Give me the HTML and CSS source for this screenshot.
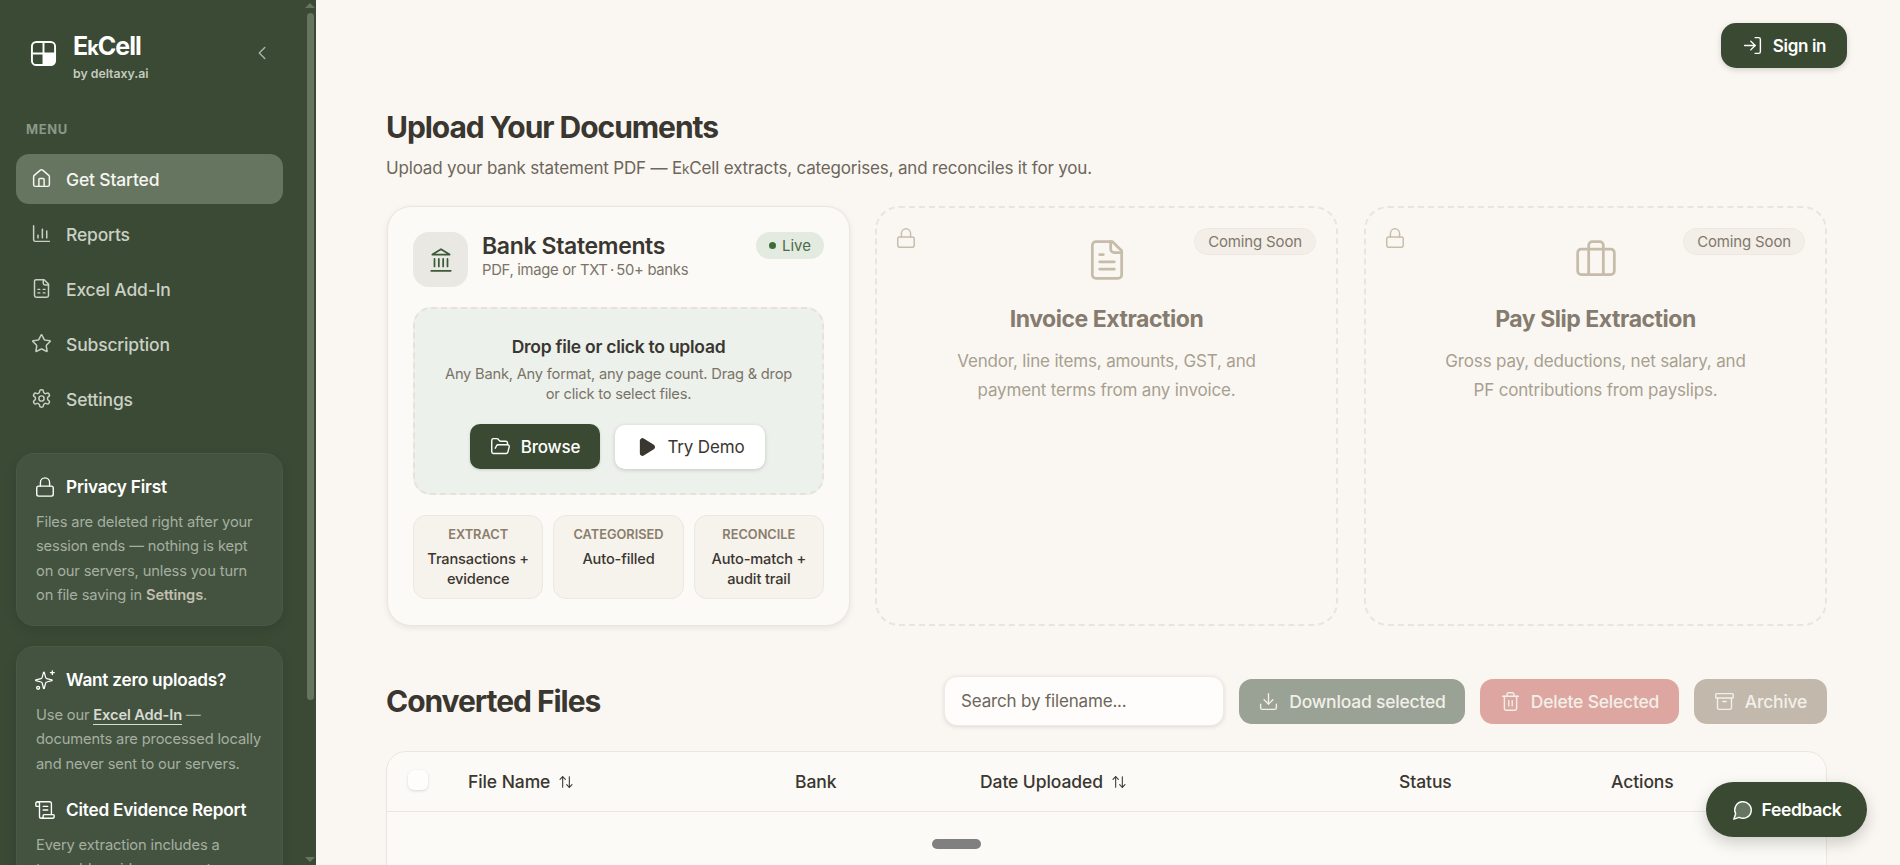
FILE: index.html
```html
<!DOCTYPE html>
<html lang="en">
<head>
  <meta charset="UTF-8" />
  <title>EkCell - Upload Your Documents</title>
  <link rel="stylesheet" href="styles.css">
</head>
<body>

  <aside class="sidebar">
    <div class="brand">
      <svg class="brand-logo" viewBox="0 0 28 28">
        <path class="brand-fill" d="M14 14h12v8a4 4 0 0 1-4 4h-8z"/>
        <rect x="2" y="2" width="24" height="24" rx="4.5"/>
        <path d="M14 2v24M2 14h24"/>
      </svg>
      <div class="brand-text">
        <div class="brand-name">E<span class="small-k">k</span>Cell</div>
        <div class="brand-sub">by deltaxy.ai</div>
      </div>
      <svg class="icon collapse" viewBox="0 0 24 24"><path d="m15 18-6-6 6-6"/></svg>
    </div>

    <div class="menu-label">MENU</div>
    <nav class="nav">
      <a class="nav-item active">
        <svg class="icon" viewBox="0 0 24 24"><path d="M15 21v-8a1 1 0 0 0-1-1h-4a1 1 0 0 0-1 1v8"/><path d="M3 10a2 2 0 0 1 .709-1.528l7-5.999a2 2 0 0 1 2.582 0l7 5.999A2 2 0 0 1 21 10v9a2 2 0 0 1-2 2H5a2 2 0 0 1-2-2z"/></svg>
        Get Started
      </a>
      <a class="nav-item">
        <svg class="icon" viewBox="0 0 24 24"><path d="M3 3v16a2 2 0 0 0 2 2h16"/><path d="M8 17v-3"/><path d="M13 17V7"/><path d="M18 17V9"/></svg>
        Reports
      </a>
      <a class="nav-item">
        <svg class="icon" viewBox="0 0 24 24"><path d="M15 2H6a2 2 0 0 0-2 2v16a2 2 0 0 0 2 2h12a2 2 0 0 0 2-2V7Z"/><path d="M14 2v4a2 2 0 0 0 2 2h4"/><path d="M8 13h2M14 13h2M8 17h2M14 17h2"/></svg>
        Excel Add-In
      </a>
      <a class="nav-item">
        <svg class="icon" viewBox="0 0 24 24"><path d="M11.525 2.295a.53.53 0 0 1 .95 0l2.31 4.679a2.123 2.123 0 0 0 1.595 1.16l5.166.756a.53.53 0 0 1 .294.904l-3.736 3.638a2.123 2.123 0 0 0-.611 1.878l.882 5.14a.53.53 0 0 1-.771.56l-4.618-2.428a2.122 2.122 0 0 0-1.973 0L6.396 21.01a.53.53 0 0 1-.77-.56l.881-5.139a2.122 2.122 0 0 0-.611-1.879L2.16 9.795a.53.53 0 0 1 .294-.906l5.165-.755a2.122 2.122 0 0 0 1.597-1.16z"/></svg>
        Subscription
      </a>
      <a class="nav-item">
        <svg class="icon" viewBox="0 0 24 24"><path d="M12.22 2h-.44a2 2 0 0 0-2 2v.18a2 2 0 0 1-1 1.73l-.43.25a2 2 0 0 1-2 0l-.15-.08a2 2 0 0 0-2.73.73l-.22.38a2 2 0 0 0 .73 2.73l.15.1a2 2 0 0 1 1 1.72v.51a2 2 0 0 1-1 1.74l-.15.09a2 2 0 0 0-.73 2.73l.22.38a2 2 0 0 0 2.73.73l.15-.08a2 2 0 0 1 2 0l.43.25a2 2 0 0 1 1 1.73V20a2 2 0 0 0 2 2h.44a2 2 0 0 0 2-2v-.18a2 2 0 0 1 1-1.73l.43-.25a2 2 0 0 1 2 0l.15.08a2 2 0 0 0 2.73-.73l.22-.39a2 2 0 0 0-.73-2.73l-.15-.08a2 2 0 0 1-1-1.74v-.5a2 2 0 0 1 1-1.74l.15-.09a2 2 0 0 0 .73-2.73l-.22-.38a2 2 0 0 0-2.73-.73l-.15.08a2 2 0 0 1-2 0l-.43-.25a2 2 0 0 1-1-1.73V4a2 2 0 0 0-2-2z"/><circle cx="12" cy="12" r="3"/></svg>
        Settings
      </a>
    </nav>

    <div class="side-card">
      <div class="side-title">
        <svg class="icon" viewBox="0 0 24 24"><rect x="3" y="11" width="18" height="11" rx="2"/><path d="M7 11V7a5 5 0 0 1 10 0v4"/></svg>
        Privacy First
      </div>
      <p class="side-text">Files are deleted right after your session ends — nothing is kept on our servers, unless you turn on file saving in <b class="settings-link">Settings</b>.</p>
    </div>

    <div class="side-card">
      <div class="side-title">
        <svg class="icon" viewBox="0 0 24 24"><path transform="translate(0 1.5) scale(.9)" d="M9.937 15.5A2 2 0 0 0 8.5 14.063l-6.135-1.582a.5.5 0 0 1 0-.962L8.5 9.936A2 2 0 0 0 9.937 8.5l1.582-6.135a.5.5 0 0 1 .963 0L14.063 8.5A2 2 0 0 0 15.5 9.937l6.135 1.581a.5.5 0 0 1 0 .964L15.5 14.063a2 2 0 0 0-1.437 1.437l-1.582 6.135a.5.5 0 0 1-.963 0z"/><path d="M20 2v4M18 4h4"/><circle cx="4.5" cy="20.5" r="1.6"/></svg>
        Want zero uploads?
      </div>
      <p class="side-text">Use our <a class="addin-link">Excel Add-In</a> — documents are processed locally and never sent to our servers.</p>
      <div class="side-title second">
        <svg class="icon" viewBox="0 0 24 24"><path d="M15 12h-5M15 8h-5"/><path d="M19 17V5a2 2 0 0 0-2-2H4"/><path d="M8 21h12a2 2 0 0 0 2-2v-1a1 1 0 0 0-1-1H11a1 1 0 0 0-1 1v1a2 2 0 1 1-4 0V5a2 2 0 1 0-4 0v2a1 1 0 0 0 1 1h3"/></svg>
        Cited Evidence Report
      </div>
      <p class="side-text">Every extraction includes a traceable evidence report.</p>
    </div>

    <div class="scrollbar">
      <span class="arrow-up"></span>
      <span class="thumb"></span>
      <span class="arrow-down"></span>
    </div>
  </aside>

  <main class="main">
    <div class="topbar">
      <button class="signin">
        <svg class="icon" viewBox="0 0 24 24"><path d="m10 17 5-5-5-5"/><path d="M15 12H3"/><path d="M15 3h4a2 2 0 0 1 2 2v14a2 2 0 0 1-2 2h-4"/></svg>
        Sign in
      </button>
    </div>

    <div class="content">
      <h1>Upload Your Documents</h1>
      <p class="subtitle">Upload your bank statement PDF — E<span class="small-k">k</span>Cell extracts, categorises, and reconciles it for you.</p>

      <div class="cards">
        <section class="card bank">
          <div class="bank-head">
            <div class="bank-icon">
              <svg class="icon" viewBox="0 0 24 24"><path d="M3 22h18"/><path d="M6 18v-7M10 18v-7M14 18v-7M18 18v-7"/><path d="M12 2l8 5H4z"/></svg>
            </div>
            <div class="bank-title">
              <h3>Bank Statements</h3>
              <span>PDF, image or TXT&thinsp;·&thinsp;50+ banks</span>
            </div>
            <span class="live"><i></i>Live</span>
          </div>

          <div class="dropzone">
            <div class="drop-title">Drop file or click to upload</div>
            <p class="drop-text">Any Bank, Any format, any page count. Drag &amp; drop or click to select files.</p>
            <div class="drop-buttons">
              <button class="browse">
                <svg class="icon" viewBox="0 0 24 24"><path d="m6 14 1.5-2.9A2 2 0 0 1 9.24 10H20a2 2 0 0 1 1.94 2.5l-1.54 6a2 2 0 0 1-1.95 1.5H4a2 2 0 0 1-2-2V5a2 2 0 0 1 2-2h3.9a2 2 0 0 1 1.69.9l.81 1.2a2 2 0 0 0 1.67.9H18a2 2 0 0 1 2 2v2"/></svg>
                Browse
              </button>
              <button class="demo">
                <svg class="icon play" viewBox="0 0 24 24"><path d="M5 5a2 2 0 0 1 3-1.7l11 7a2 2 0 0 1 0 3.4l-11 7A2 2 0 0 1 5 19z"/></svg>
                Try Demo
              </button>
            </div>
          </div>

          <div class="steps">
            <div class="step"><b>EXTRACT</b><span>Transactions + evidence</span></div>
            <div class="step"><b>CATEGORISED</b><span>Auto-filled</span></div>
            <div class="step"><b>RECONCILE</b><span>Auto-match + audit trail</span></div>
          </div>
        </section>

        <section class="card soon">
          <svg class="icon soon-lock" viewBox="0 0 24 24"><rect x="3" y="11" width="18" height="11" rx="2"/><path d="M7 11V7a5 5 0 0 1 10 0v4"/></svg>
          <span class="soon-badge">Coming Soon</span>
          <svg class="icon soon-icon" viewBox="0 0 24 24"><path d="M15 2H6a2 2 0 0 0-2 2v16a2 2 0 0 0 2 2h12a2 2 0 0 0 2-2V7Z"/><path d="M14 2v4a2 2 0 0 0 2 2h4"/><path d="M10 9H8M16 13H8M16 17H8"/></svg>
          <h3>Invoice Extraction</h3>
          <p>Vendor, line items, amounts, GST, and payment terms from any invoice.</p>
        </section>

        <section class="card soon">
          <svg class="icon soon-lock" viewBox="0 0 24 24"><rect x="3" y="11" width="18" height="11" rx="2"/><path d="M7 11V7a5 5 0 0 1 10 0v4"/></svg>
          <span class="soon-badge">Coming Soon</span>
          <svg class="icon soon-icon" viewBox="0 0 24 24"><path d="M16 20V4a2 2 0 0 0-2-2h-4a2 2 0 0 0-2 2v16"/><rect x="2" y="6" width="20" height="14" rx="2"/></svg>
          <h3>Pay Slip Extraction</h3>
          <p>Gross pay, deductions, net salary, and PF contributions from payslips.</p>
        </section>
      </div>

      <div class="files-head">
        <h2>Converted Files</h2>
        <input class="search" type="text" placeholder="Search by filename..." />
        <button class="action download">
          <svg class="icon" viewBox="0 0 24 24"><path d="M12 15V3"/><path d="M21 15v4a2 2 0 0 1-2 2H5a2 2 0 0 1-2-2v-4"/><path d="m7 10 5 5 5-5"/></svg>
          Download selected
        </button>
        <button class="action delete">
          <svg class="icon" viewBox="0 0 24 24"><path d="M3 6h18"/><path d="M19 6v14a2 2 0 0 1-2 2H7a2 2 0 0 1-2-2V6"/><path d="M8 6V4a2 2 0 0 1 2-2h4a2 2 0 0 1 2 2v2"/><path d="M10 11v6M14 11v6"/></svg>
          Delete Selected
        </button>
        <button class="action archive">
          <svg class="icon" viewBox="0 0 24 24"><rect x="2" y="3" width="20" height="5" rx="1"/><path d="M4 8v11a2 2 0 0 0 2 2h12a2 2 0 0 0 2-2V8"/><path d="M10 12h4"/></svg>
          Archive
        </button>
      </div>

      <div class="table">
        <div class="table-row">
          <span class="checkbox"></span>
          <span class="col-name">File Name <svg class="icon sort" viewBox="0 0 24 24"><path d="m21 16-4 4-4-4"/><path d="M17 20V4"/><path d="m3 8 4-4 4 4"/><path d="M7 4v16"/></svg></span>
          <span class="col-bank">Bank</span>
          <span class="col-date">Date Uploaded <svg class="icon sort" viewBox="0 0 24 24"><path d="m21 16-4 4-4-4"/><path d="M17 20V4"/><path d="m3 8 4-4 4 4"/><path d="M7 4v16"/></svg></span>
          <span class="col-status">Status</span>
          <span class="col-actions">Actions</span>
        </div>
      </div>
    </div>

    <span class="drag-pill"></span>
    <button class="feedback">
      <svg class="icon" viewBox="0 0 24 24"><path d="M7.9 20A9 9 0 1 0 4 16.1L2 22Z"/></svg>
      Feedback
    </button>
  </main>

</body>
</html>
```

FILE: styles.css
```css
* {
  box-sizing: border-box;
}

html, body {
  height: 100%;
}

body {
  margin: 0;
  display: flex;
  height: 100vh;
  overflow: hidden;
  background-color: #faf7f2;
  color: #3a3630;
  font-family: Inter, "Liberation Sans", sans-serif;
}

h1, h2, h3, p {
  margin: 0;
}

button {
  display: flex;
  align-items: center;
  justify-content: center;
  border: none;
  font-family: inherit;
}

.icon {
  width: 18px;
  height: 18px;
  flex-shrink: 0;
  fill: none;
  stroke: currentColor;
  stroke-width: 1.6;
  stroke-linecap: round;
  stroke-linejoin: round;
}

.small-k {
  font-size: 0.8em;
}

/* sidebar */
.sidebar {
  position: relative;
  flex: 0 0 316px;
  height: 100%;
  overflow: hidden;
  padding: 0 33px 0 16px;
  background-color: #3a4a35;
}

.brand {
  display: flex;
  align-items: flex-start;
  height: 117px;
  padding: 33px 0 0 14px;
}

.brand-logo {
  width: 27px;
  height: 27px;
  margin-top: 7px;
  fill: none;
  stroke: #fff;
  stroke-width: 2;
}

.brand-fill {
  fill: #fff;
  stroke: none;
}

.brand-text {
  margin-left: 16px;
}

.brand-name {
  color: #fff;
  font-size: 25px;
  line-height: 26px;
  font-weight: 700;
  letter-spacing: -0.04em;
}

.brand-sub {
  margin-top: 5px;
  color: #c5cbbf;
  font-size: 12.3px;
  line-height: 16px;
  font-weight: 600;
}

.collapse {
  width: 22px;
  height: 22px;
  margin: 9px 10px 0 auto;
  color: #a9b3a4;
}

.menu-label {
  height: 37px;
  padding-left: 10px;
  padding-top: 4px;
  color: #8b9887;
  font-size: 13px;
  line-height: 16px;
  font-weight: 700;
  letter-spacing: 0.05em;
}

.nav {
  display: flex;
  flex-direction: column;
  gap: 5px;
}

.nav-item {
  display: flex;
  align-items: center;
  gap: 14px;
  height: 50px;
  padding: 1px 0 0 15px;
  border-radius: 13px;
  color: #cbd0c5;
  font-size: 17.5px;
  font-weight: 500;
  letter-spacing: -0.01em;
}

.nav-item .icon {
  width: 21px;
  height: 21px;
  margin-top: -2px;
  stroke-width: 1.7;
}

.nav-item.active {
  background-color: #66755f;
  color: #f6f6f1;
}

.side-card {
  margin-top: 20px;
  padding: 21px 19px 18px;
  border: 1px solid #4a5946;
  border-radius: 18px;
  background-color: #445340;
  box-shadow: 0 4px 12px rgba(0, 0, 0, 0.1);
}

.nav + .side-card {
  margin-top: 29px;
}

.side-title {
  display: flex;
  align-items: center;
  gap: 10px;
  color: #fff;
  font-size: 17.2px;
  line-height: 24px;
  font-weight: 600;
  letter-spacing: -0.012em;
}

.side-title .icon {
  width: 22px;
  height: 22px;
  margin-left: -2px;
  stroke-width: 1.5;
}

.side-title.second {
  margin-top: 22px;
}

.side-text {
  margin-top: 11px;
  color: #a5afa1;
  font-size: 14.7px;
  line-height: 24.3px;
  letter-spacing: -0.01em;
}

.settings-link {
  color: #c2bfae;
  font-weight: 600;
}

.addin-link {
  border-bottom: 1px solid #d8dbd2;
  color: #d8dbd2;
  font-weight: 600;
}

/* fake scrollbar sits over the sidebar edge */
.scrollbar {
  position: absolute;
  top: 0;
  right: 0;
  bottom: 0;
  display: flex;
  flex-direction: column;
  align-items: center;
  width: 12px;
  padding: 3px 0;
}

.arrow-up, .arrow-down {
  width: 0;
  height: 0;
  border-left: 5px solid transparent;
  border-right: 5px solid transparent;
}

.arrow-up {
  border-bottom: 5px solid #66755f;
}

.arrow-down {
  margin-top: auto;
  border-top: 5px solid #66755f;
}

.thumb {
  width: 7px;
  height: 687px;
  margin-top: 5px;
  border-radius: 4px;
  background-color: #66755f;
}

/* main area */
.main {
  position: relative;
  flex: 1;
  height: 100%;
  overflow: hidden;
}

.topbar {
  display: flex;
  justify-content: flex-end;
  padding: 23px 53px 0 0;
}

.signin {
  gap: 10px;
  width: 126px;
  height: 45px;
  border-radius: 15px;
  background-color: #3a4a32;
  box-shadow: 0 2px 6px rgba(0, 0, 0, 0.15);
  color: #fff;
  font-size: 17px;
  font-weight: 600;
  letter-spacing: -0.02em;
}

.signin .icon {
  width: 21px;
  height: 21px;
}

.content {
  padding: 0 73px 0 70px;
}

h1 {
  margin-top: 41px;
  font-size: 30px;
  line-height: 36px;
  font-weight: 700;
  letter-spacing: -0.035em;
}

.subtitle {
  margin-top: 10px;
  color: #6d665b;
  font-size: 17px;
  line-height: 26px;
  letter-spacing: -0.01em;
}

.cards {
  display: grid;
  grid-template-columns: repeat(3, 1fr);
  gap: 26px;
  height: 420px;
  margin-top: 24px;
}

.card {
  position: relative;
  border-radius: 24px;
}

.bank {
  margin: 0 -1px 0 1px;
  padding: 25px;
  border: 1px solid #ebe6dd;
  background-color: #fcfaf6;
  box-shadow: 0 2px 6px rgba(0, 0, 0, 0.08);
}

.bank-head {
  display: flex;
  align-items: flex-start;
  gap: 14px;
}

.bank-icon {
  display: flex;
  align-items: center;
  justify-content: center;
  width: 55px;
  height: 55px;
  border-radius: 16px;
  background-color: #e9e8e2;
  color: #3c5a38;
}

.bank-icon .icon {
  width: 26px;
  height: 26px;
}

.bank-title {
  flex: 1;
}

.bank-title h3 {
  font-size: 23px;
  line-height: 28px;
  font-weight: 600;
  letter-spacing: -0.015em;
}

.bank-title span {
  display: block;
  color: #7a7468;
  font-size: 14.8px;
  line-height: 20px;
  letter-spacing: -0.02em;
}

.live {
  display: flex;
  align-items: center;
  gap: 6px;
  height: 27px;
  padding: 0 13px;
  border-radius: 14px;
  background-color: #e3ebe0;
  color: #4c6b47;
  font-size: 15px;
}

.live i {
  width: 7px;
  height: 7px;
  border-radius: 50%;
  background-color: #3f6b3a;
}

.dropzone {
  height: 188px;
  margin-top: 20px;
  padding: 27px 28px 0;
  border: 2px dashed #e8e2d8;
  border-radius: 18px;
  background-color: #edf1ec;
  text-align: center;
}

.drop-title {
  font-size: 17.5px;
  line-height: 22px;
  font-weight: 600;
  letter-spacing: -0.015em;
}

.drop-text {
  margin-top: 6px;
  color: #7a7468;
  font-size: 14.7px;
  line-height: 20px;
  letter-spacing: -0.015em;
}

.drop-buttons {
  display: flex;
  justify-content: center;
  gap: 15px;
  margin-top: 20px;
  padding-right: 2px;
}

.browse, .demo {
  gap: 10px;
  border-radius: 10px;
  font-size: 17px;
  letter-spacing: -0.01em;
}

.browse {
  width: 130px;
  height: 45px;
  background-color: #3a4a32;
  box-shadow: 0 1px 3px rgba(0, 0, 0, 0.15);
  color: #fff;
  font-weight: 500;
}

.browse .icon {
  width: 21px;
  height: 21px;
}

.demo {
  width: 150px;
  height: 44px;
  margin-top: 1px;
  background-color: #fff;
  box-shadow: 0 1px 4px rgba(0, 0, 0, 0.18);
  color: #3a3630;
}

.demo .icon {
  width: 22px;
  height: 22px;
}

.play {
  fill: currentColor;
}

.steps {
  display: grid;
  grid-template-columns: repeat(3, 1fr);
  gap: 10px;
  margin-top: 20px;
}

.step {
  height: 84px;
  padding: 10px 4px 0;
  border: 1px solid #ece7df;
  border-radius: 13px;
  background-color: #f6f2ec;
  text-align: center;
}

.step b {
  display: block;
  color: #8a7d6b;
  font-size: 12.8px;
  line-height: 18px;
  font-weight: 600;
}

.step span {
  display: block;
  margin-top: 5px;
  font-size: 14.6px;
  line-height: 20px;
  font-weight: 500;
  letter-spacing: -0.01em;
}

.soon {
  display: flex;
  flex-direction: column;
  align-items: center;
  padding: 30px 30px 0;
  border: 2px dashed #eae5dc;
  text-align: center;
}

.soon-lock {
  position: absolute;
  top: 19px;
  left: 18px;
  width: 22px;
  height: 22px;
  color: #c8bdab;
}

.soon-badge {
  position: absolute;
  top: 20px;
  right: 20px;
  height: 27px;
  padding: 0 13px;
  border: 1px solid #eee9e0;
  border-radius: 14px;
  background-color: #f3efe8;
  color: #7f786c;
  font-size: 15px;
  line-height: 25px;
  letter-spacing: -0.01em;
}

.soon-icon {
  width: 44px;
  height: 44px;
  stroke-width: 1.5;
  color: #c6bcaa;
}

.soon h3 {
  margin-top: 22px;
  color: #857b6f;
  font-size: 23px;
  line-height: 30px;
  font-weight: 700;
  letter-spacing: -0.02em;
}

.soon p {
  width: 310px;
  margin-top: 13px;
  color: #a89f91;
  font-size: 17px;
  line-height: 29px;
  letter-spacing: -0.01em;
}

.files-head {
  display: flex;
  align-items: center;
  gap: 15px;
  height: 50px;
  margin-top: 50px;
}

.files-head h2 {
  flex: 1;
  font-size: 30px;
  font-weight: 700;
  letter-spacing: -0.035em;
}

.search {
  width: 280px;
  height: 50px;
  padding: 0 16px;
  border: 1px solid #efebe3;
  border-radius: 13px;
  outline: none;
  background-color: #fefdfb;
  box-shadow: 0 1px 4px rgba(0, 0, 0, 0.12);
  font-family: inherit;
  font-size: 17px;
  letter-spacing: -0.01em;
}

.search::placeholder {
  color: #6d665b;
}

.action {
  gap: 10px;
  height: 45px;
  border-radius: 13px;
  color: #f2efe9;
  font-size: 17.5px;
  font-weight: 500;
  letter-spacing: -0.012em;
}

.action .icon {
  width: 21px;
  height: 21px;
}

.download {
  width: 226px;
  background-color: #99a294;
}

.delete {
  width: 199px;
  background-color: #dea6a0;
}

.archive {
  width: 133px;
  background-color: #c2b9ac;
}

.table {
  height: 200px;
  margin-top: 25px;
  border: 1px solid #ebe6dd;
  border-radius: 20px;
  background-color: #fcfaf6;
}

.table-row {
  display: grid;
  grid-template-columns: 60px 327px 185px 419px 212px 1fr;
  align-items: center;
  height: 60px;
  padding-left: 21px;
  border-bottom: 1px solid #ebe6dd;
  font-size: 17.5px;
  font-weight: 500;
  letter-spacing: -0.005em;
}

.checkbox {
  width: 20px;
  height: 20px;
  margin-bottom: 4px;
  border-radius: 6px;
  background-color: #fefdfb;
  box-shadow: 0 1px 3px rgba(0, 0, 0, 0.14);
}

.col-name, .col-date {
  display: flex;
  align-items: center;
  gap: 8px;
}

.sort {
  width: 16px;
  height: 16px;
}

.drag-pill {
  position: absolute;
  left: 616px;
  top: 839px;
  width: 49px;
  height: 10px;
  border-radius: 5px;
  background-color: #808080;
}

.feedback {
  position: absolute;
  top: 782px;
  right: 33px;
  gap: 8px;
  width: 161px;
  height: 55px;
  border-radius: 28px;
  background-color: #3a4a32;
  box-shadow: 0 6px 16px rgba(0, 0, 0, 0.18);
  color: #fff;
  font-size: 17.5px;
  font-weight: 600;
  letter-spacing: -0.02em;
}

.feedback .icon {
  width: 22px;
  height: 22px;
  fill: #66755f;
}
```
